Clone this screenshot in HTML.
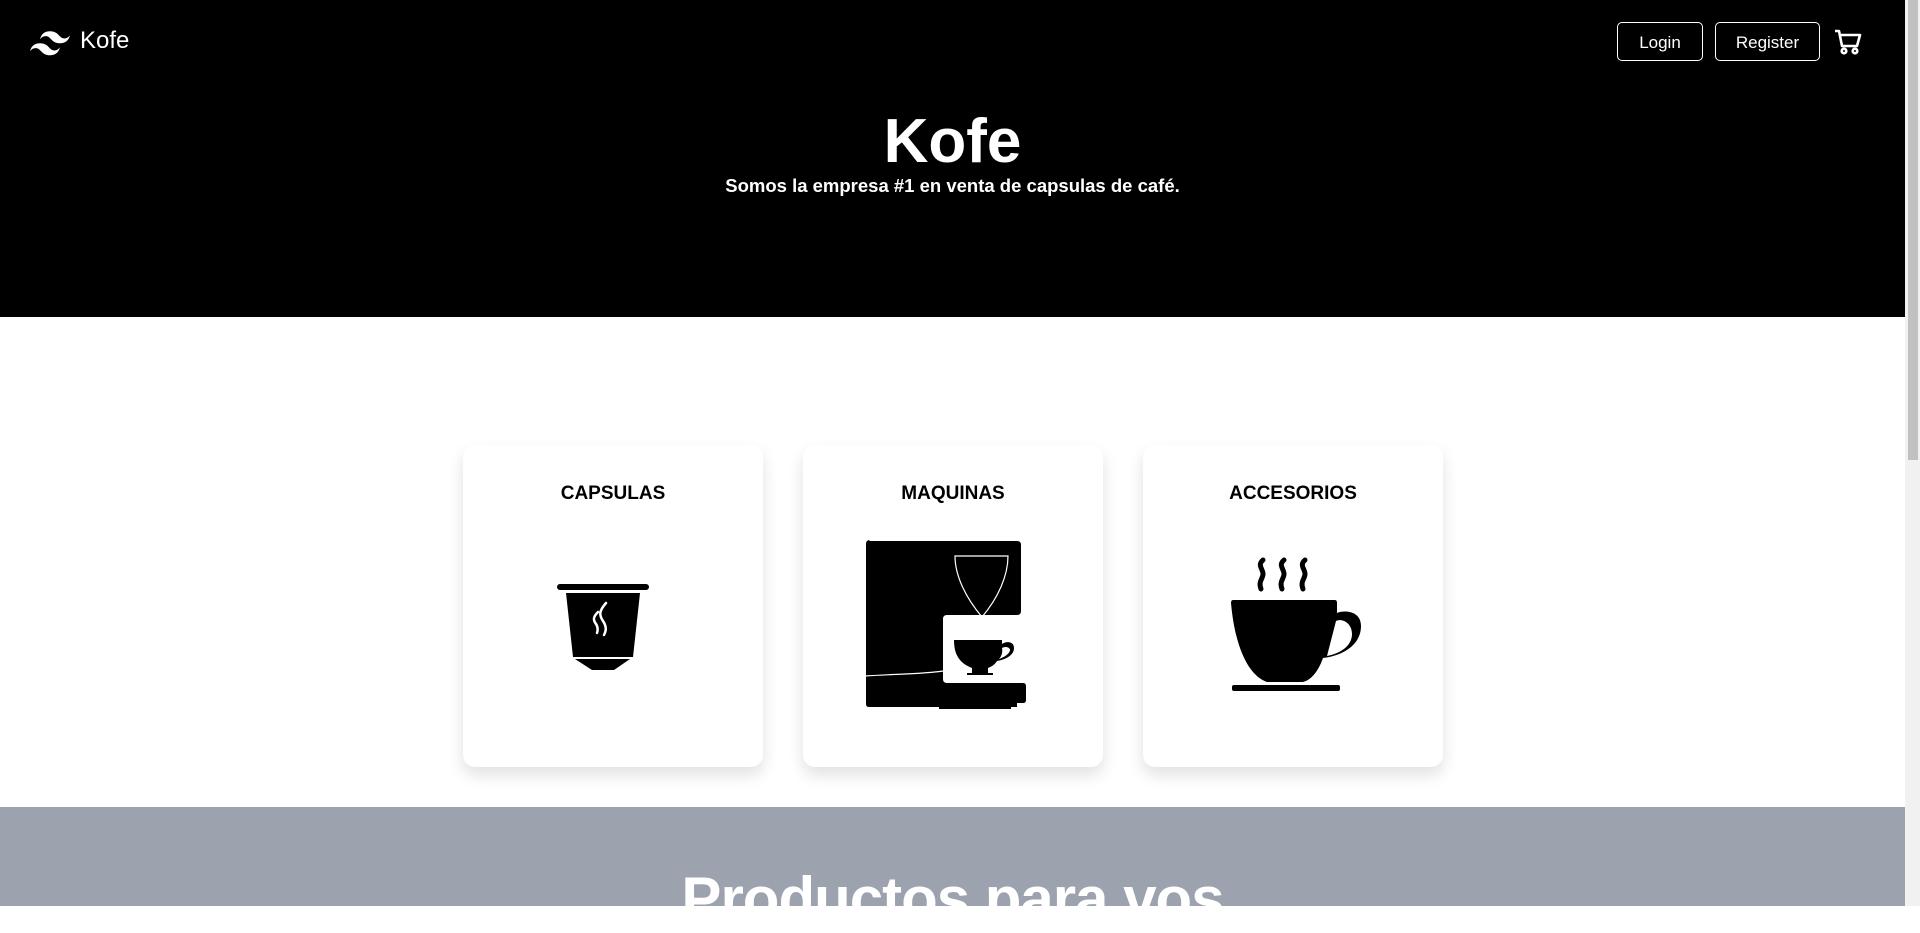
<!DOCTYPE html>
<html><head><meta charset="utf-8"><style>
*{margin:0;padding:0;box-sizing:border-box}
html,body{width:1920px;height:906px;overflow:hidden;background:#fff;font-family:"Segoe UI","Liberation Sans","DejaVu Sans",sans-serif}
.hdr{position:absolute;left:0;top:0;width:1905px;height:317px;background:#000;color:#fff}
.logo{position:absolute;left:80px;top:27px;font-size:24px}
.btn{position:absolute;top:22px;height:39px;border:1px solid #fff;border-radius:5px;color:#fff;font-size:17px;line-height:39px;text-align:center}
h1{position:absolute;left:0;width:1905px;top:107px;text-align:center;font-size:62px;line-height:70px;font-weight:bold}
.sub{position:absolute;left:0;width:1905px;top:175px;text-align:center;font-size:18.5px;font-weight:bold}
.card{position:absolute;top:445px;width:300px;height:322px;background:#fff;border-radius:12px;box-shadow:0 8px 16px rgba(0,0,0,.12)}
.card div{position:absolute;top:38px;width:100%;text-align:center;font-weight:bold;font-size:19px}
.gray{position:absolute;left:0;top:807px;width:1905px;height:99px;background:#9ca3af}
.gray div{position:absolute;left:0;width:1905px;top:57px;text-align:center;color:#fff;font-weight:bold;font-size:60px;letter-spacing:-1px}
.sb{position:absolute;left:1905px;top:0;width:15px;height:906px;background:#f1f1f1}
.sb i{position:absolute;left:3px;top:0;width:10px;height:460px;background:#c1c1c1}
</style></head><body>
<div class="hdr">
<svg style="position:absolute;left:30px;top:31px" width="40" height="25" viewBox="0 0 54 33"><path fill="#fff" d="M27 0c-7.2 0-11.7 3.6-13.5 10.8 2.7-3.6 5.85-4.95 9.45-4.05 2.054.513 3.522 2.004 5.147 3.653C30.744 13.09 33.808 16.2 40.5 16.2c7.2 0 11.7-3.6 13.5-10.8-2.7 3.6-5.850 4.95-9.45 4.05-2.054-.513-3.522-2.004-5.147-3.653C36.756 3.110 33.692 0 27 0zM13.5 16.2C6.3 16.2 1.8 19.8 0 27c2.7-3.6 5.85-4.95 9.45-4.05 2.054.514 3.522 2.004 5.147 3.653C17.244 29.290 20.308 32.4 27 32.4c7.2 0 11.7-3.6 13.5-10.8-2.7 3.6-5.85 4.95-9.45 4.05-2.054-.513-3.522-2.004-5.147-3.653C23.256 19.310 20.192 16.2 13.5 16.2z"/></svg>
<div class="logo">Kofe</div>
<div class="btn" style="left:1617px;width:86px">Login</div>
<div class="btn" style="left:1715px;width:105px">Register</div>
<svg style="position:absolute;left:1834px;top:28px" width="28" height="28" viewBox="0 0 28 28" fill="none" stroke="#fff" stroke-width="2.6" stroke-linejoin="round"><path d="M1 3h4l3 15h15l3-11H7"/><circle cx="10" cy="23" r="2.3"/><circle cx="21" cy="23" r="2.3"/></svg>
<h1>Kofe</h1>
<div class="sub">Somos la empresa #1 en venta de capsulas de café.</div>
</div>
<div class="card" style="left:463px"><div>CAPSULAS</div></div>
<div class="card" style="left:803px"><div>MAQUINAS</div></div>
<div class="card" style="left:1143px"><div>ACCESORIOS</div></div>
<svg style="position:absolute;left:0;top:0" width="1920" height="906" viewBox="0 0 1920 906">
<rect x="557" y="584" width="92" height="6" rx="3"/>
<path d="M566 593h74l-7 64h-60z"/>
<path d="M575 659h55l-16 11h-22z"/>
<path fill="none" stroke="#fff" stroke-width="2.5" stroke-linecap="round" d="M606 603c-7 8-7 12-3 18 4 6 3 10 1 14M598 612c-5 5-5 8-2 12 2 3 2 6 1 9"/>
<path d="M869 541h148q4 0 4 4v66q0 4-4 4h-70q-4 0-4 4v60q0 4 4 4h76q3 0 3 3v14q0 3-3 3h-6v4h-6v2h-72v-2h-70q-3 0-3-3v-160q0-4 4-4z"/>
<path fill="none" stroke="#fff" stroke-width="1.2" d="M955 556h53c0 20-10 42-26 61-16-19-27-41-27-61zM865 676c30-2 60-2 78-5"/>
<path d="M954 640h48v4c4-3 12-3 12 4 0 8-10 12-17 13-2 3-4 5-9 7v5h5v2h-26v-2h5v-5c-13-5-18-14-18-28zM1002 648c1 5-1 9-3 11 6-2 11-6 11-9 0-3-5-4-8-2z"/>
<g fill="none" stroke="#000" stroke-width="5" stroke-linecap="round"><path d="M1263 560c-6 5 0 9 0 14s-5 7-2 15"/><path d="M1284 560c-6 5 0 9 0 14s-5 7-2 15"/><path d="M1305 560c-6 5 0 9 0 14s-5 7-2 15"/></g>
<path fill-rule="evenodd" d="M1233 600h102q2 0 2 3v10c6-3 24-3 24 13 0 20-20 30-38 32-5 14-12 22-20 24h-36c-18-6-32-34-36-79q0-3 2-3zM1336 621l-9 35c15-3 25-11 25-22 0-11-10-16-16-13z"/>
<rect x="1232" y="685" width="108" height="6" rx="2"/>
</svg>
<div class="gray"><div>Productos para vos</div></div>
<div class="sb"><i></i></div>
</body></html>
